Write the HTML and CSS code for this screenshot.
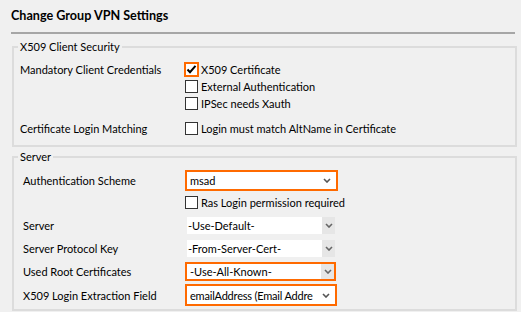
FILE: index.html
```html
<!DOCTYPE html>
<html lang="en">
<head>
    <meta charset="UTF-8" />
    <title>Change Group VPN Settings</title>
    <link rel="stylesheet" href="styles.css">
</head>
<body>
    <div class="page">
        <h1 class="title">Change Group VPN Settings</h1>

        <fieldset class="group group-client">
            <legend>X509 Client Security</legend>
            <div class="row row-creds">
                <div class="label">Mandatory Client Credentials</div>
                <div class="checks">
                    <div class="opt">
                        <span class="box checked focus">
                            <svg width="11" height="11" viewBox="0 0 11 11"><path d="M1.5 5.5 L4 8.2 L9.5 1.8" fill="none" stroke="#000" stroke-width="2"/></svg>
                        </span>X509 Certificate
                    </div>
                    <div class="opt"><span class="box"></span>External Authentication</div>
                    <div class="opt"><span class="box"></span>IPSec needs Xauth</div>
                </div>
            </div>
            <div class="row row-match">
                <div class="label">Certificate Login Matching</div>
                <div class="opt"><span class="box"></span>Login must match AltName in Certificate</div>
            </div>
        </fieldset>

        <fieldset class="group group-server">
            <legend>Server</legend>
            <div class="row row-auth">
                <div class="label">Authentication Scheme</div>
                <div class="select focus"><span class="value">msad</span><span class="arrow"><svg width="8" height="5" viewBox="0 0 8 5"><path d="M1 1 L4 4 L7 1" fill="none" stroke="#555" stroke-width="1.6"/></svg></span></div>
            </div>
            <div class="row row-ras">
                <div class="label"></div>
                <div class="opt"><span class="box"></span>Ras Login permission required</div>
            </div>
            <div class="row row-srv">
                <div class="label">Server</div>
                <div class="select"><span class="value">-Use-Default-</span><span class="arrow shaded"><svg width="8" height="5" viewBox="0 0 8 5"><path d="M1 1 L4 4 L7 1" fill="none" stroke="#666" stroke-width="1.6"/></svg></span></div>
            </div>
            <div class="row row-key">
                <div class="label">Server Protocol Key</div>
                <div class="select"><span class="value">-From-Server-Cert-</span><span class="arrow shaded"><svg width="8" height="5" viewBox="0 0 8 5"><path d="M1 1 L4 4 L7 1" fill="none" stroke="#666" stroke-width="1.6"/></svg></span></div>
            </div>
            <div class="row row-root">
                <div class="label">Used Root Certificates</div>
                <div class="select focus"><span class="value">-Use-All-Known-</span><span class="arrow shaded"><svg width="8" height="5" viewBox="0 0 8 5"><path d="M1 1 L4 4 L7 1" fill="none" stroke="#666" stroke-width="1.6"/></svg></span></div>
            </div>
            <div class="row row-field">
                <div class="label">X509 Login Extraction Field</div>
                <div class="select focus"><span class="value">emailAddress (Email Addre</span><span class="arrow"><svg width="8" height="5" viewBox="0 0 8 5"><path d="M1 1 L4 4 L7 1" fill="none" stroke="#555" stroke-width="1.6"/></svg></span></div>
            </div>
        </fieldset>
    </div>
</body>
</html>
```

FILE: styles.css
```css
body {
    margin: 0;
    background: #f0f0f0;
    font-family: 'Segoe UI', Lato, 'Liberation Sans', sans-serif;
    font-size: 11px;
    color: #000;
}

.page {
    padding: 0 6px 0 11px;
}

.title {
    margin: 0;
    padding: 8px 0 8px 0;
    font-size: 12.6px;
    line-height: 16px;
    font-weight: bold;
    border-bottom: 2px solid #a6a6a6;
}

.group {
    margin: 6px -2px 0 1px;
    padding: 0 8px 8px 4px;
    border: 2px solid #dcdcdc;
}
.group-server {
    margin-top: 3px;
    padding-bottom: 3px;
}

legend {
    padding: 0 2px;
    line-height: 14px;
}

.row {
    display: grid;
    grid-template-columns: 167px 1fr;
    align-items: center;
}
.group-server .label { padding-left: 5px; }
.group-client .label { padding-left: 2px; }

.row-creds { margin-top: 7px; align-items: start; }
.row-creds .label { line-height: 17px; }
.row-match { margin-top: 8px; }

.opt {
    display: flex;
    align-items: center;
    height: 17px;
    white-space: nowrap;
}

.box {
    box-sizing: border-box;
    width: 13px;
    height: 13px;
    border: 1px solid #333;
    background: #fff;
    margin-right: 3px;
    display: flex;
    align-items: center;
    justify-content: center;
}
.box.focus {
    width: 15px;
    height: 15px;
    margin: 0 2px 0 -1px;
    border: 2px solid #ff6a00;
}

.select {
    box-sizing: border-box;
    display: flex;
    align-items: center;
    width: 148px;
    height: 17px;
    margin-left: 2px;
    padding-left: 1px;
    background: #fff;
    white-space: nowrap;
}
.select.focus {
    width: 153px;
    margin-left: 0;
    padding-left: 3px;
    border: 2px solid #ff6a00;
}

.value {
    flex: 1;
    min-width: 0;
    overflow: hidden;
}

.arrow {
    flex: none;
    width: 13px;
    height: 100%;
    margin-left: 4px;
    display: flex;
    align-items: center;
    justify-content: center;
    background: #fff;
}
.select.focus .arrow { margin-right: 3px; }
.arrow.shaded { background: #e6e6e6; }
.select.focus .arrow.shaded { margin-right: 0; }

.row-auth { margin-top: 6px; }
.row-auth .select { height: 21px; }
.row-ras { margin-top: 5px; }
.row-ras .opt { height: 13px; }
.row-srv { margin-top: 8px; }
.row-key { margin-top: 6px; }
.row-root { margin-top: 5px; }
.row-root .select { height: 19px; width: 151px; }
.row-field { margin-top: 3px; }
.row-field .select { height: 22px; width: 152px; }
.row-field .value { letter-spacing: -0.2px; }
.row-field .arrow { margin-left: 0; margin-right: 2px; }
```
